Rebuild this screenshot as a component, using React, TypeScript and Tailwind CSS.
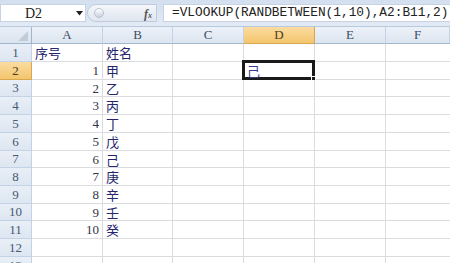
import React from "react";

const rowHeights = [18, 18, 17, 18, 18, 18, 17, 18, 18, 17, 18, 18, 18];
const names = ["甲", "乙", "丙", "丁", "戊", "己", "庚", "辛", "壬", "癸"];
const cols = [
  { l: "A", w: "w-[71px]" },
  { l: "B", w: "w-[70px]" },
  { l: "C", w: "w-[71px]" },
  { l: "D", w: "w-[71px]" },
  { l: "E", w: "w-[71px]" },
  { l: "F", w: "w-[64px]" },
];

const mono = { fontFamily: '"Liberation Mono", monospace' } as const;
const serif = { fontFamily: '"Liberation Serif", serif' } as const;
const cjk = { fontFamily: '"Noto Sans CJK SC", sans-serif' } as const;

function Row({ idx, h }: { idx: number; h: number }) {
  const r = idx + 1;
  const sel = r === 2;
  let a: React.ReactNode = null;
  let b: React.ReactNode = null;
  if (r === 1) {
    a = <span style={cjk} className="text-[13px] text-[#26266e] pl-[3px]">序号</span>;
    b = <span style={cjk} className="text-[13px] text-[#26266e] pl-[3px]">姓名</span>;
  } else if (r >= 2 && r <= 11) {
    a = <span style={serif} className="text-[13px] text-[#333344] ml-auto pr-[3px]">{r - 1}</span>;
    b = <span style={cjk} className="text-[13px] text-[#26266e] pl-[3px]">{names[r - 2]}</span>;
  }
  return (
    <div className="flex" style={{ height: h }}>
      <div
        style={serif}
        className={`w-[32px] shrink-0 flex items-center justify-center text-[13px] border-b border-r ${
          sel
            ? "bg-gradient-to-b from-[#fbdca0] to-[#f3c56c] text-[#4a3a20] border-[#d9a74f]"
            : "bg-gradient-to-b from-[#e9eff7] to-[#dde6f1] text-[#465a72] border-[#c3d2e4]"
        }`}
      >
        {r}
      </div>
      <div className="w-[71px] shrink-0 flex items-center border-b border-r border-[#dadcdf] leading-none">{a}</div>
      <div className="w-[70px] shrink-0 flex items-center border-b border-r border-[#dadcdf] leading-none">{b}</div>
      <div className="w-[71px] shrink-0 border-b border-r border-[#dadcdf]" />
      <div className="w-[71px] shrink-0 border-b border-r border-[#dadcdf] relative">
        {sel && (
          <div className="absolute -left-[2px] -top-[2px] w-[73px] h-[20px] border-[3px] border-[#1a1a1a] flex items-center">
            <span style={cjk} className="text-[13px] text-[#3a3a8a] pl-[2px] leading-none">己</span>
            <div className="absolute -right-[4px] -bottom-[4px] w-[5px] h-[5px] bg-[#1a1a1a] border border-white" />
          </div>
        )}
      </div>
      <div className="w-[71px] shrink-0 border-b border-r border-[#dadcdf]" />
      <div className="w-[64px] shrink-0 border-b border-[#dadcdf]" />
    </div>
  );
}

export default function App() {
  return (
    <div className="w-[450px] h-[263px] overflow-hidden bg-white">
      {/* formula bar */}
      <div className="h-[27px] bg-gradient-to-b from-[#d3dfef] to-[#e2eaf5] flex items-start pt-[4px] border-b border-[#b9c9dd]">
        <div className="w-[86px] h-[18px] bg-white border border-[#c7d3e3] flex items-center relative">
          <span style={serif} className="text-[14px] text-[#222] ml-[24px]">D2</span>
          <svg className="absolute left-[75px] top-[6px]" width="7" height="5" viewBox="0 0 7 5">
            <path d="M0 0 H7 L3.5 4.5 Z" fill="#222" />
          </svg>
        </div>
        <div className="w-[77px] h-[18px] flex items-center relative">
          <div className="absolute left-[1px] top-0 h-[18px] w-[70px] rounded-l-full bg-gradient-to-b from-[#f4f7fb] to-[#dfe6ef] border border-[#c0ccdb]" />
          <div className="absolute left-[8px] top-[4px] w-[10px] h-[10px] rounded-full bg-gradient-to-b from-[#ffffff] to-[#c9d2de] border border-[#b8c3d2]" />
          <span className="absolute left-[58px] top-[1px] text-[12px] italic font-bold text-[#555]" style={serif}>
            f<span className="text-[8px]">x</span>
          </span>
        </div>
        <div className="flex-1 h-[18px] bg-white border border-[#c7d3e3] border-r-0 flex items-center overflow-hidden whitespace-nowrap">
          <span style={mono} className="text-[12.8px] text-[#222] ml-[8px]">=VLOOKUP(RANDBETWEEN(1,10),A2:B11,2)</span>
        </div>
      </div>
      {/* column header */}
      <div className="flex h-[17px]">
        <div className="w-[32px] shrink-0 bg-gradient-to-b from-[#e9eff7] to-[#dbe4ef] border-b border-r border-[#9eb6ce] relative">
          <svg className="absolute right-[3px] bottom-[2px]" width="10" height="10" viewBox="0 0 10 10">
            <path d="M10 0 V10 H0 Z" fill="#c2ccd8" />
          </svg>
        </div>
        {cols.map((c) => (
          <div
            key={c.l}
            style={serif}
            className={`${c.w} shrink-0 flex items-center justify-center text-[13px] border-b border-r ${
              c.l === "D"
                ? "bg-gradient-to-b from-[#fbdca0] to-[#f3c56c] text-[#4a3a20] border-[#d9a74f]"
                : "bg-gradient-to-b from-[#edf2f9] to-[#dce5f0] text-[#3d4d63] border-[#c3d2e4] border-b-[#9eb6ce]"
            }`}
          >
            {c.l}
          </div>
        ))}
      </div>
      {rowHeights.map((h, i) => (
        <Row key={i} idx={i} h={h} />
      ))}
    </div>
  );
}
